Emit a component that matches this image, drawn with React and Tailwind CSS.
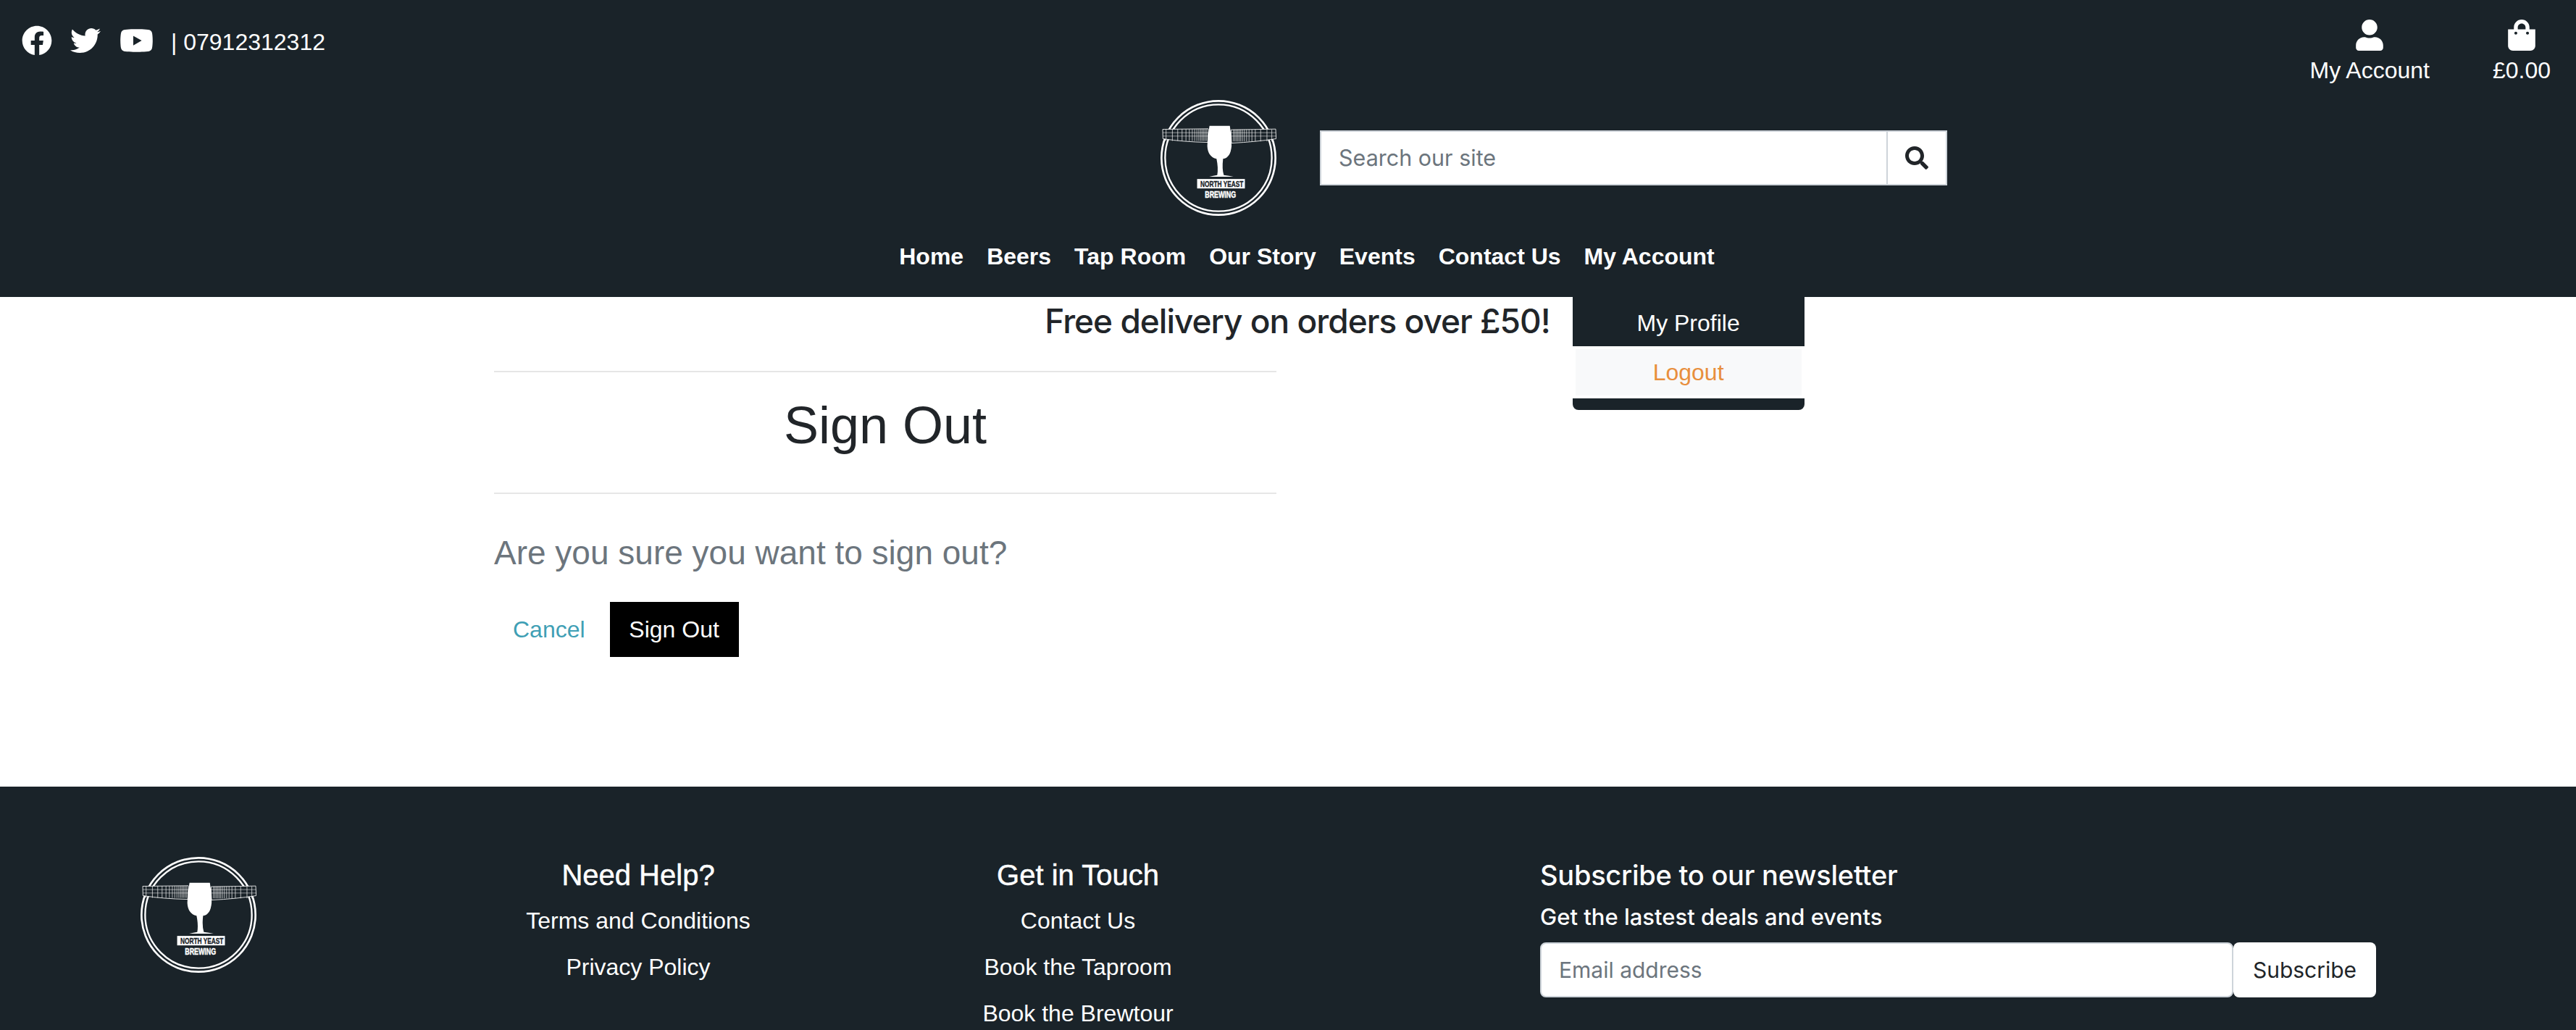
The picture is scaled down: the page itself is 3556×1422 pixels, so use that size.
import React from "react";
import { FaFacebook, FaTwitter, FaYoutube, FaUser, FaShoppingBag, FaSearch } from "react-icons/fa";

const navLinks = ["Home", "Beers", "Tap Room", "Our Story", "Events", "Contact Us"];
const leftGrid = [150, 176, 198, 216, 232, 246, 258, 268, 277, 285, 292, 298, 304, 310, 316];
const rightGrid = [428, 434, 440, 446, 452, 458, 465, 473, 482, 492, 504, 518, 540, 566, 586];

const Logo = () => (
  <svg viewBox="127 55 478 478" className="w-[160px] h-[160px] shrink-0">
    <circle cx="366" cy="294" r="235" fill="none" stroke="#fff" strokeWidth="8" />
    <circle cx="366" cy="294" r="220" fill="none" stroke="#fff" strokeWidth="7" />
    <path d="M136 176 L324 174 L322 230 Q220 228 137 215 Z" fill="#1a2329" stroke="#fff" strokeWidth="2.5" />
    <path d="M418 178 L602 175 L604 215 Q520 228 420 233 Z" fill="#1a2329" stroke="#fff" strokeWidth="2.5" />
    <path d="M136 190 L324 190 M137 204 L323 204 M418 190 L603 190 M419 204 L604 204" stroke="#fff" strokeWidth="1.5" />
    {leftGrid.map((x) => (
      <path key={x} d={`M${x} 175 V224`} stroke="#fff" strokeWidth="2" />
    ))}
    {rightGrid.map((x) => (
      <path key={x} d={`M${x} 177 V226`} stroke="#fff" strokeWidth="2" />
    ))}
    <path
      d="M329 162 H413 Q421 205 420 245 Q416 294 385 298 Q380 340 388 365 Q410 367 428 372 H328 Q345 367 361 365 Q366 335 358 298 Q322 290 320 245 Q320 205 329 162 Z"
      fill="#fff"
    />
    <rect x="278" y="381" width="197" height="39" fill="#fff" />
    <text x="380" y="413" textAnchor="middle" textLength="178" lengthAdjust="spacingAndGlyphs" fontFamily="'Liberation Sans', sans-serif" fontWeight="700" fontSize="35" fill="#1a2329" stroke="#1a2329" strokeWidth="1">
      NORTH YEAST
    </text>
    <text x="374" y="457" textAnchor="middle" textLength="128" lengthAdjust="spacingAndGlyphs" fontFamily="'Liberation Sans', sans-serif" fontWeight="700" fontSize="37" fill="#fff" stroke="#fff" strokeWidth="1.5">
      BREWING
    </text>
  </svg>
);

const App = () => {
  return (
    <div className="h-[1422px] overflow-hidden bg-white font-['Liberation_Sans',Arial,sans-serif] text-[32px] leading-[48px] text-[#212529]">
      <header className="h-[410px] bg-[#1a2329] text-white">
        <div className="flex h-[138px] justify-between">
          <div className="flex items-start pl-[30px] pt-[35px]">
            <FaFacebook className="w-[42px] h-[42px]" />
            <FaTwitter className="ml-[25px] w-[42px] h-[42px]" />
            <FaYoutube className="ml-[26px] w-[47px] h-[42px]" />
            <span className="ml-[24px] mt-[-1px]">| 07912312312</span>
          </div>
          <div className="flex items-start gap-[87px] pr-[35px] pt-[27px]">
            <div className="flex flex-col items-center">
              <FaUser className="w-[38px] h-[43px]" />
              <span className="mt-[3px]">My Account</span>
            </div>
            <div className="flex flex-col items-center">
              <FaShoppingBag className="w-[38px] h-[43px]" />
              <span className="mt-[3px]">£0.00</span>
            </div>
          </div>
        </div>

        <div className="flex h-[159px] items-center pl-[1602px]">
          <Logo />
          <form className="ml-[60px] flex h-[76px] w-[866px] border-2 border-[#ced4da] bg-white">
            <input
              placeholder="Search our site"
              className="min-w-0 flex-1 bg-white px-[24px] font-['Inter',sans-serif] text-[30.5px] text-[#212529] outline-none placeholder:text-[#6c757d]"
            />
            <button type="button" className="flex w-[82px] items-center justify-center border-l-2 border-[#ced4da] text-[#212529]">
              <FaSearch className="w-[32px] h-[32px]" />
            </button>
          </form>
        </div>

        <nav className="mt-[33px] flex justify-center pl-[52px] font-bold">
          {navLinks.map((link) => (
            <a key={link} className="h-[80px] px-[16px]">
              {link}
            </a>
          ))}
          <div className="relative h-[80px] px-[16px]">
            <a>My Account</a>
            <div className="absolute left-0 top-full z-10 w-[320px] rounded-b-[8px] bg-[#1a2329] pb-[16px] text-center font-normal">
              <a className="block h-[68px] pt-[12px]">My Profile</a>
              <a className="block h-[72px] border-4 border-white bg-[#f8f9fa] pt-[8px] text-[#e88f3d]">Logout</a>
            </div>
          </div>
        </nav>
      </header>

      <main className="h-[676px]">
        <h4 className="pl-[26px] pt-[4px] text-center font-['Inter',sans-serif] text-[46px] font-medium leading-[58px] tracking-[-1px]">
          Free delivery on orders over £50!
        </h4>
        <div className="ml-[682px] w-[1080px]">
          <div className="mt-[40px] h-[170px] border-y-2 border-[#e6e6e6] pt-[30px] text-center text-[72px] leading-[86px]">
            Sign Out
          </div>
          <p className="mt-[52px] text-[46px] leading-[58px] text-[#6c757d]">Are you sure you want to sign out?</p>
          <div className="mt-[39px] flex">
            <a className="flex h-[76px] items-center px-[26px] text-[#3f9fb5]">Cancel</a>
            <button type="button" className="ml-[8px] h-[76px] w-[178px] bg-black text-white">
              Sign Out
            </button>
          </div>
        </div>
      </main>

      <footer className="grid h-[336px] grid-cols-[581px_600px_614px_1fr] bg-[#1a2329] pt-[97px] text-white">
        <div className="pl-[194px]">
          <Logo />
        </div>
        <div className="pt-[1px] text-center">
          <h5 className="text-[40px] leading-[48px] [-webkit-text-stroke:0.5px_white]">Need Help?</h5>
          <div className="mt-[15px] flex flex-col gap-[16px]">
            <a>Terms and Conditions</a>
            <a>Privacy Policy</a>
          </div>
        </div>
        <div className="pt-[1px] text-center">
          <h5 className="text-[40px] leading-[48px] [-webkit-text-stroke:0.5px_white]">Get in Touch</h5>
          <div className="mt-[15px] flex flex-col gap-[16px]">
            <a>Contact Us</a>
            <a>Book the Taproom</a>
            <a>Book the Brewtour</a>
          </div>
        </div>
        <div className="pl-[331px] pt-[1px] font-['Inter',sans-serif]">
          <h5 className="text-[38px] font-medium leading-[48px] tracking-[-0.25px]">Subscribe to our newsletter</h5>
          <p className="mt-[10px] text-[31px] font-medium">Get the lastest deals and events</p>
          <div className="mt-[11px] flex h-[76px] w-[1154px]">
            <input
              placeholder="Email address"
              className="w-[957px] rounded-[8px] border-2 border-[#ced4da] bg-white px-[24px] text-[30px] text-[#212529] outline-none placeholder:text-[#6c757d]"
            />
            <button type="button" className="w-[197px] rounded-[8px] bg-white text-[30px] text-[#212529]">
              Subscribe
            </button>
          </div>
        </div>
      </footer>
    </div>
  );
};

export default App;
